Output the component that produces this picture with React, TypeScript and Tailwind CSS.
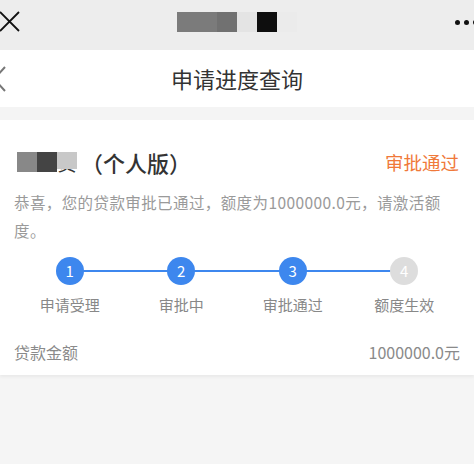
import React from "react";

const steps = [
  { n: "1", label: "申请受理", done: true },
  { n: "2", label: "审批中", done: true },
  { n: "3", label: "审批通过", done: true },
  { n: "4", label: "额度生效", done: false },
];

export default function App() {
  return (
    <div
      className="w-[474px] h-[464px] bg-[#f5f5f5] overflow-hidden"
      style={{ fontFamily: '"Noto Sans CJK SC", "Noto Sans", sans-serif' }}
    >
      {/* top bar */}
      <div className="relative h-[50px] bg-[#ededed] flex items-center justify-center">
        <svg className="absolute left-[-2px] top-[10px]" width="24" height="24" viewBox="0 0 24 24">
          <path d="M2 2 L21 21 M21 2 L2 21" stroke="#111" strokeWidth="1.8" fill="none" />
        </svg>
        <div className="flex h-[20px] mt-[-6px]">
          <div className="w-[40px] bg-[#7b7b7b]" />
          <div className="w-[20px] bg-[#717171]" />
          <div className="w-[20px] bg-[#e4e4e4]" />
          <div className="w-[20px] bg-[#0e0e0e]" />
          <div className="w-[20px] bg-[#ebebeb]" />
        </div>
        <div className="absolute right-[-4px] top-[20px] flex gap-[4px]">
          <div className="w-[5px] h-[5px] rounded-full bg-[#111]" />
          <div className="w-[5px] h-[5px] rounded-full bg-[#111]" />
          <div className="w-[5px] h-[5px] rounded-full bg-[#111]" />
        </div>
      </div>

      {/* header */}
      <div className="relative h-[57px] bg-white flex items-center justify-center">
        <svg className="absolute left-[-8px] top-[16px]" width="16" height="26" viewBox="0 0 16 26">
          <path d="M13 1 L2 13 L13 25" stroke="#777" strokeWidth="2" fill="none" />
        </svg>
        <span className="text-[22px] leading-none text-[#333] mt-[-1px]">申请进度查询</span>
      </div>

      <div className="h-[13px] bg-[#f4f4f4]" />

      {/* card */}
      <div className="bg-white px-[14px] pt-[29px] pb-[13px] shadow-[0_2px_3px_rgba(0,0,0,0.05)]">
        <div className="flex items-center justify-between h-[26px]">
          <div className="flex items-center">
            <div className="relative flex h-[20px] ml-[3px]">
              <div className="w-[20px] bg-[#888]" />
              <div className="w-[20px] bg-[#444]" />
              <div className="relative w-[20px]">
                <span className="block text-[20px] leading-[22px] text-[#333]">贷</span>
                <div className="absolute left-0 top-0 w-[20px] h-[17px] bg-[#c8c8c8]" />
              </div>
            </div>
            <span className="text-[22px] leading-[26px] text-[#333] font-medium ml-[4px]">（个人版）</span>
          </div>
          <span className="text-[18.5px] leading-[26px] text-[#f0793a] mr-[1px]">审批通过</span>
        </div>

        <p className="mt-[13px] text-[15.5px] leading-[28px] text-[#9a9a9a] tracking-[0.4px]">
          恭喜，您的贷款审批已通过，额度为1000000.0元，请激活额度。
        </p>

        <div className="mt-[13px] grid grid-cols-4">
          {steps.map((s, i) => (
            <div key={s.n} className="flex flex-col items-center">
              <div className="relative w-full h-[28px] flex justify-center">
                {i > 0 && (
                  <div className="absolute left-0 right-1/2 top-[13px] h-[2px] bg-[#3d87ee]" />
                )}
                {i < steps.length - 1 && (
                  <div className="absolute left-1/2 right-0 top-[13px] h-[2px] bg-[#3d87ee]" />
                )}
                <div
                  className={
                    "relative w-[28px] h-[28px] rounded-full flex items-center justify-center text-white text-[15px] " +
                    (s.done ? "bg-[#3d87ee]" : "bg-[#dddddd]")
                  }
                >
                  {s.n}
                </div>
              </div>
              <span className="mt-[10px] text-[15px] leading-[20px] text-[#888]">{s.label}</span>
            </div>
          ))}
        </div>

        <div className="mt-[27px] flex justify-between items-center h-[20px] text-[16px] text-[#8a8a8a]">
          <span>贷款金额</span>
          <span>1000000.0元</span>
        </div>
      </div>
    </div>
  );
}
